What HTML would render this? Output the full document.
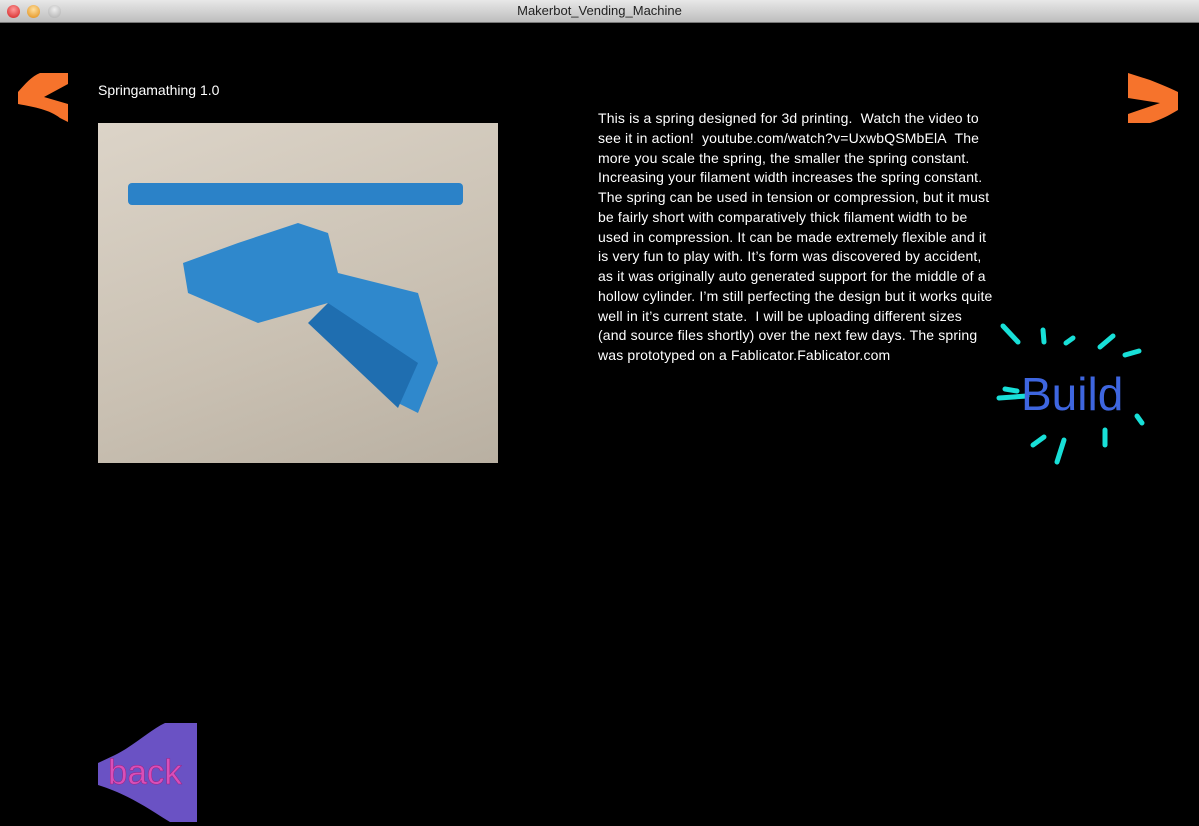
<!DOCTYPE html>
<html><head><style>
body{margin:0;width:1199px;height:826px;background:#000;overflow:hidden;position:relative;font-family:"Liberation Sans",sans-serif}
.tb{position:absolute;left:0;top:0;width:1199px;height:22px;background:linear-gradient(#e8e8e8,#bdbdbd);border-bottom:1px solid #777;text-align:center;font-size:13px;line-height:22px;color:#222}
.dot{position:absolute;top:5px;width:13px;height:13px;border-radius:50%}
.t{position:absolute;color:#fff;font-size:14px}
.desc{left:598px;top:109px;line-height:19.75px;letter-spacing:0.15px;white-space:nowrap}
</style></head><body>
<div class="tb">Makerbot_Vending_Machine
<div class="dot" style="left:7px;background:radial-gradient(circle at 50% 35%,#ff9a9a,#d11b1b)"></div>
<div class="dot" style="left:27px;background:radial-gradient(circle at 50% 35%,#ffe0a0,#e08a10)"></div>
<div class="dot" style="left:48px;background:radial-gradient(circle at 50% 35%,#eee,#aaa)"></div>
</div>
<svg style="position:absolute;left:0;top:0" width="1199" height="826">
<path d="M40 73 L68 73 L68 84 L44 97 L68 104 L68 122 L60 118 C50 110 35 107 18 104 L18 92 C25 84 32 76 40 73Z" fill="#f6732c"/>
<path d="M1128 73 L1150 80 C1160 84 1170 88 1178 92 L1178 110 C1168 116 1160 120 1150 123 L1128 123 L1128 114 L1160 103 L1128 98Z" fill="#f6732c"/>
<path d="M98 785 L98 763 L115 755 C135 745 150 730 165 723 L197 723 L197 822 L170 822 C150 810 130 795 98 785Z" fill="#6a52c4"/>
<g stroke="#18e0d8" stroke-width="5" stroke-linecap="round">
<line x1="1003" y1="326" x2="1018" y2="342"/><line x1="1043" y1="330" x2="1044" y2="342"/>
<line x1="1066" y1="343" x2="1073" y2="338"/><line x1="1100" y1="347" x2="1113" y2="336"/>
<line x1="1125" y1="355" x2="1139" y2="351"/><line x1="1005" y1="389" x2="1017" y2="391"/>
<line x1="999" y1="398" x2="1027" y2="396"/><line x1="1137" y1="416" x2="1142" y2="423"/>
<line x1="1033" y1="445" x2="1044" y2="437"/><line x1="1057" y1="462" x2="1064" y2="440"/>
<line x1="1105" y1="430" x2="1105" y2="445"/>
</g>
<text x="1021" y="410" font-family="Liberation Sans" font-size="46" fill="#3e66e0">Build</text>
<text x="108" y="784" font-family="Liberation Sans" font-size="35" fill="#d94fb8" stroke="#a02080" stroke-width="0.5">back</text>
</svg>
<div class="t" style="left:98px;top:82px">Springamathing 1.0</div>
<div style="position:absolute;left:98px;top:123px;width:400px;height:340px;background:linear-gradient(160deg,#dcd4c8,#c9c0b2 60%,#b9b0a2)">
<svg width="400" height="340">
<rect x="30" y="60" width="335" height="22" rx="4" fill="#2b82c8"/>
<path d="M85 140 L140 120 L200 100 L230 110 L240 150 L320 170 L340 240 L320 290 L300 280 L230 180 L160 200 L90 170Z" fill="#2f88cc"/>
<path d="M230 180 L320 240 L300 285 L210 200Z" fill="#1f6eb0"/>
</svg></div>
<div class="t desc">This is a spring designed for 3d printing.&nbsp; Watch the video to<br>see it in action!&nbsp; youtube.com/watch?v=UxwbQSMbElA&nbsp; The<br>more you scale the spring, the smaller the spring constant.<br>Increasing your filament width increases the spring constant.<br>The spring can be used in tension or compression, but it must<br>be fairly short with comparatively thick filament width to be<br>used in compression. It can be made extremely flexible and it<br>is very fun to play with. It’s form was discovered by accident,<br>as it was originally auto generated support for the middle of a<br>hollow cylinder. I’m still perfecting the design but it works quite<br>well in it’s current state.&nbsp; I will be uploading different sizes<br>(and source files shortly) over the next few days. The spring<br>was prototyped on a Fablicator.Fablicator.com</div>
</body></html>
